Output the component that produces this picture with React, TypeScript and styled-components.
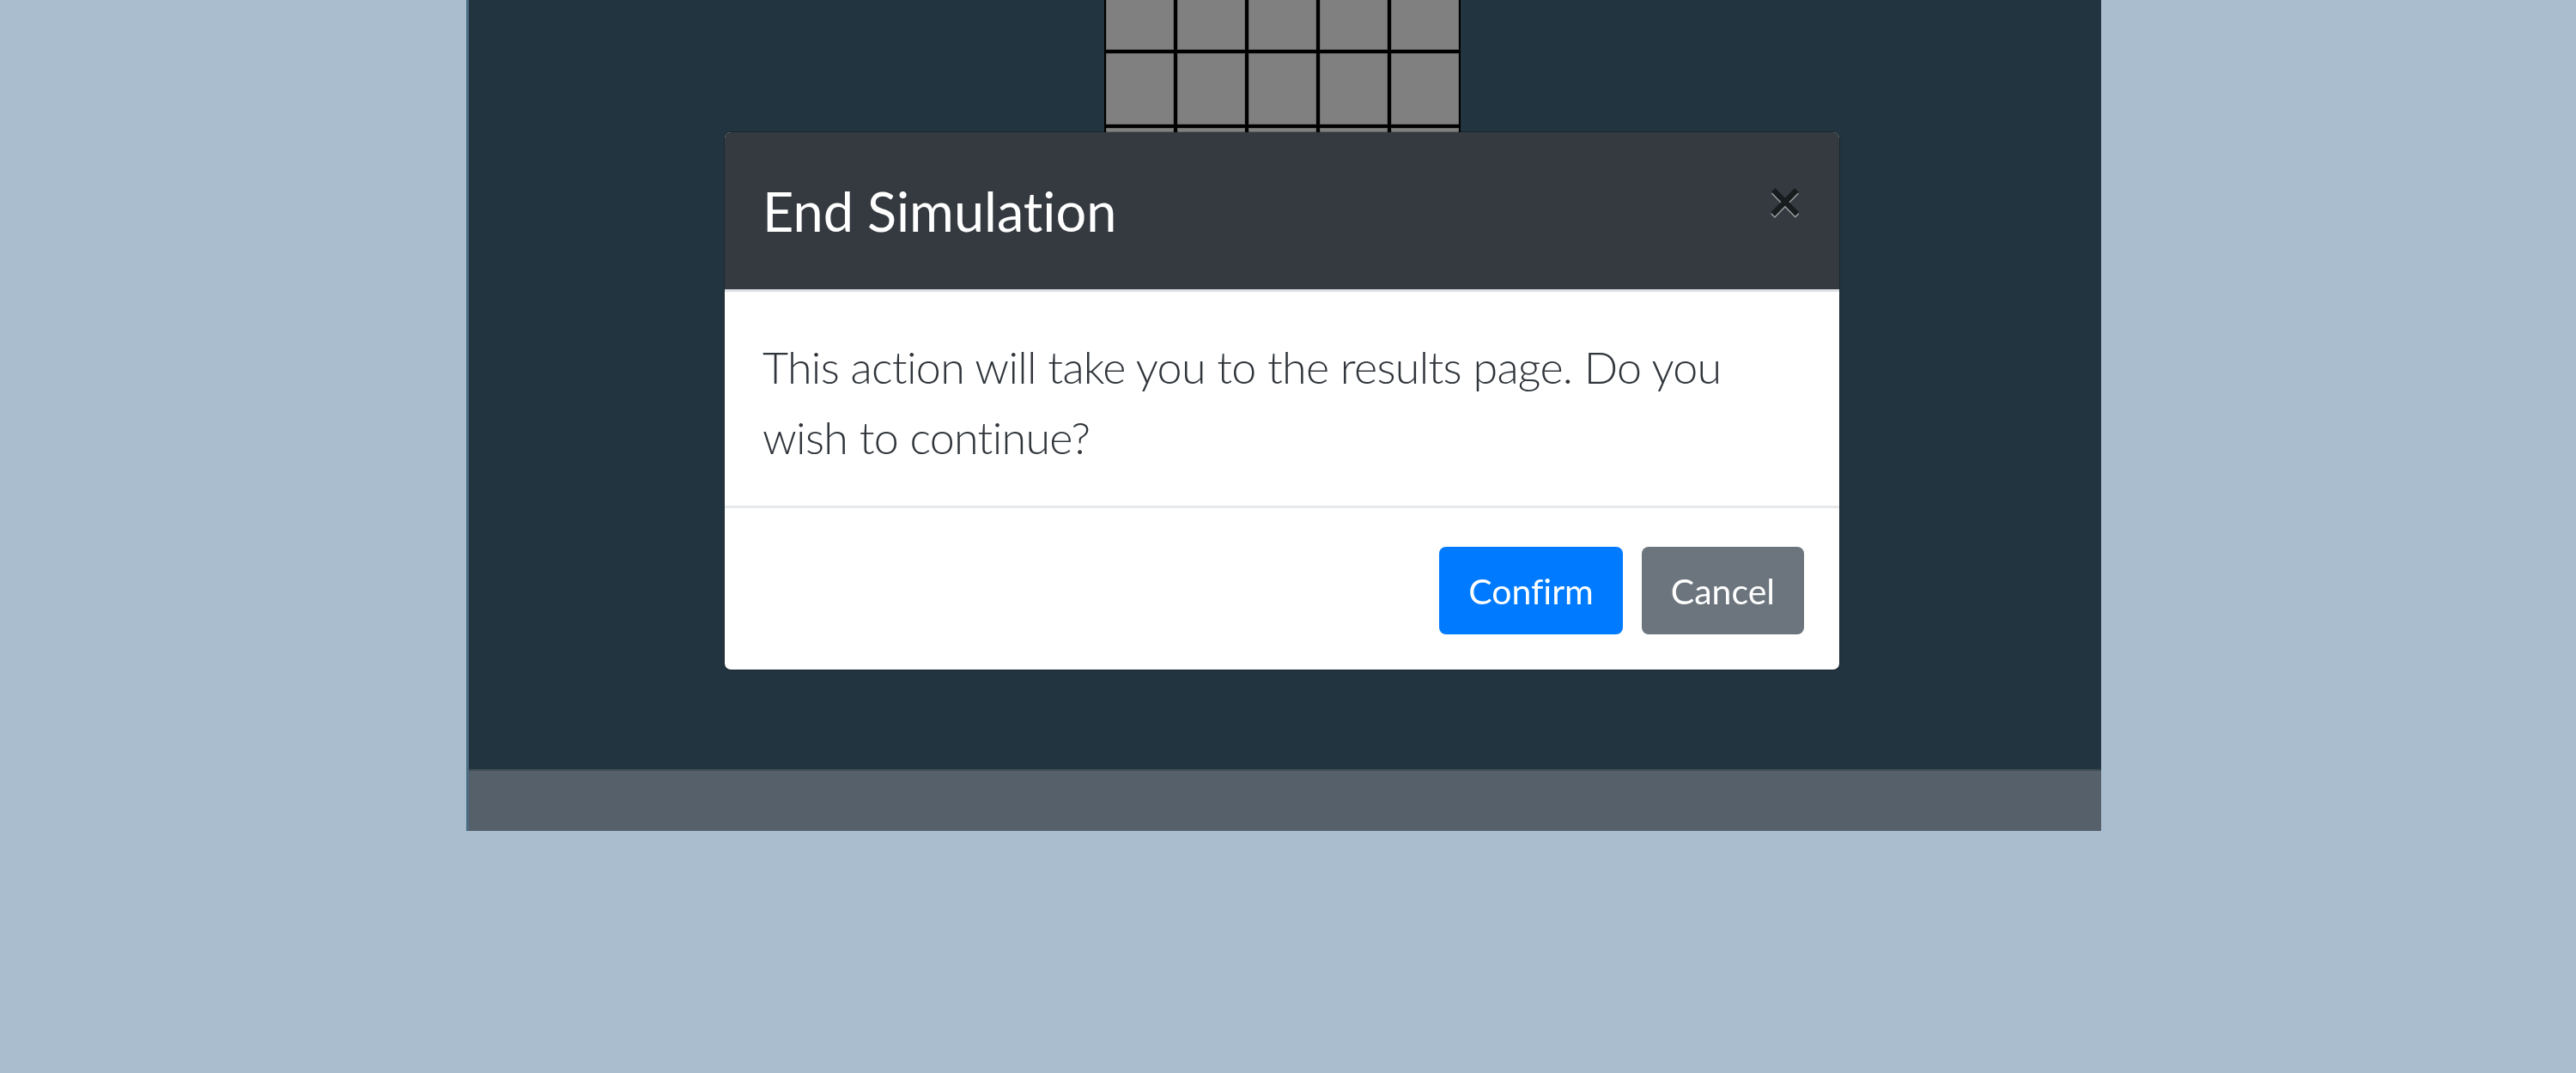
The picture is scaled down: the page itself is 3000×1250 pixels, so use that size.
import React from "react";
import styled, { createGlobalStyle } from "styled-components";

const GlobalStyle = createGlobalStyle`
  html, body {
    margin: 0;
    padding: 0;
    background: #a9bdcf;
    font-family: "Lato", "Liberation Sans", sans-serif;
    font-variant-ligatures: none;
  }
  * { box-sizing: border-box; }
  button { font-variant-ligatures: none; }
`;

const Page = styled.div`
  min-height: 1250px;
  padding-left: 543px;
`;

const Panel = styled.div`
  width: 1904px;
  border-left: 3px solid #4b6d84;
  display: flex;
  flex-direction: column;
`;

const Stage = styled.div`
  height: 896px;
  background: #22343f;
  display: flex;
  justify-content: center;
  overflow: hidden;
`;

const Board = styled.div`
  margin-top: -27px;
  margin-left: -6px;
  display: grid;
  grid-template-columns: repeat(5, 83px);
  grid-auto-rows: 87px;
  align-self: flex-start;
`;

const Cell = styled.div`
  background: #808080;
  border: 2px solid #000;
  box-shadow: inset 0 0 0 1px #6a6a6a;
`;

const Footer = styled.div`
  height: 72px;
  background: #56606a;
  border-top: 2px solid #3f4c56;
`;

const Overlay = styled.div`
  position: fixed;
  inset: 0;
  display: flex;
  justify-content: center;
  align-items: flex-start;
  padding-top: 153px;
  padding-right: 14px;
`;

const Dialog = styled.div`
  width: 1300px;
  background: #fff;
  background-clip: padding-box;
  border: 1px solid rgba(0, 0, 0, 0.2);
  border-radius: 8px;
  overflow: hidden;
  display: flex;
  flex-direction: column;
`;

const Header = styled.div`
  height: 186px;
  background: #343a40;
  border-bottom: 3px solid #dee2e6;
  display: flex;
  align-items: center;
  justify-content: space-between;
  padding: 0 43px 0 44px;
`;

const Title = styled.h5`
  margin: 0;
  color: #fff;
  font-family: "Lato", "Liberation Sans", sans-serif;
  font-weight: 400;
  font-size: 63px;
  line-height: 1.2;
  font-variant-ligatures: none;
`;

const Close = styled.button`
  background: transparent;
  border: 0;
  padding: 0;
  margin-top: -27px;
  font-family: "Lato", "Liberation Sans", sans-serif;
  font-weight: 700;
  font-size: 70px;
  line-height: 1;
  color: #000;
  opacity: 0.5;
  text-shadow: 0 2px 0 #fff;
  cursor: pointer;
`;

const Body = styled.div`
  padding: 46px 44px 39px;
`;

const Text = styled.p`
  margin: 0;
  color: #30353b;
  font-family: "Lato", "Liberation Sans", sans-serif;
  font-weight: 300;
  font-size: 52px;
  letter-spacing: -0.7px;
  line-height: 82px;
  font-variant-ligatures: none;
`;

const Actions = styled.div`
  border-top: 3px solid #e6e9ec;
  display: flex;
  justify-content: flex-end;
  gap: 22px;
  padding: 45px 41px 41px;
`;

const Button = styled.button<{ $variant: "primary" | "secondary" }>`
  height: 102px;
  padding: 0 34px;
  border: 0;
  border-radius: 8px;
  font-family: "Lato", "Liberation Sans", sans-serif;
  font-weight: 400;
  font-size: 41px;
  font-variant-ligatures: none;
  color: #fff;
  background: ${(p) => (p.$variant === "primary" ? "#007bff" : "#6c757d")};
  cursor: pointer;
`;

export default function App() {
  const cells = Array.from({ length: 25 });
  return (
    <>
      <GlobalStyle />
      <Page>
        <Panel>
          <Stage>
            <Board>
              {cells.map((_, i) => (
                <Cell key={i} />
              ))}
            </Board>
          </Stage>
          <Footer />
        </Panel>
      </Page>
      <Overlay>
        <Dialog>
          <Header>
            <Title>End Simulation</Title>
            <Close aria-label="Close">×</Close>
          </Header>
          <Body>
            <Text>
              This action will take you to the results page. Do you wish to continue?
            </Text>
          </Body>
          <Actions>
            <Button $variant="primary">Confirm</Button>
            <Button $variant="secondary">Cancel</Button>
          </Actions>
        </Dialog>
      </Overlay>
    </>
  );
}
